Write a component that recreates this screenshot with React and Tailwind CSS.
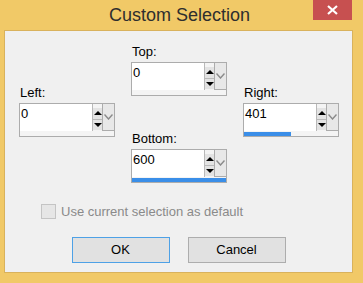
import React from "react"

const SpinBox = ({ value, fill }) => (
  <div className="w-[96px] h-[34px] border border-[#acacac] bg-[#f4f4f4] flex flex-col">
    <div className="flex h-[27px]">
      <div className="flex-1 bg-white pl-[1px] pt-[2px] text-[13px] leading-[16px] text-black">{value}</div>
      <div className="w-[10px] flex flex-col border-l border-[#b9b9b9]">
        <div className="flex-1 mt-[4px] bg-[#e3e3e3] border-b border-[#b9b9b9] flex items-center justify-center">
          <div className="w-0 h-0 border-l-[4px] border-r-[4px] border-b-[4px] border-l-transparent border-r-transparent border-b-black" />
        </div>
        <div className="flex-1 mb-[1px] bg-[#e3e3e3] flex items-center justify-center">
          <div className="w-0 h-0 border-l-[4px] border-r-[4px] border-t-[4px] border-l-transparent border-r-transparent border-t-black" />
        </div>
      </div>
      <div className="w-[13px] -mt-[1px] -mr-[1px] h-[28px] bg-[#e8e8e8] border border-[#acacac] flex items-center justify-center">
        <svg width="9" height="6" viewBox="0 0 9 6">
          <path d="M0.5 0.5 L4.5 5 L8.5 0.5" fill="none" stroke="#8a8a8a" strokeWidth="1.4" />
        </svg>
      </div>
    </div>
    <div className="h-[5px] mt-[1px]">
      {fill > 0 && <div className="h-[4px] bg-[#3a8ee8]" style={{ width: `${fill}%` }} />}
    </div>
  </div>
)

const Field = ({ label, value, fill }) => (
  <div className="flex flex-col">
    <div className="h-[15px] leading-[15px] text-[13px] text-black mb-[3px] pl-[1px]">{label}</div>
    <SpinBox value={value} fill={fill} />
  </div>
)

export default function App() {
  return (
    <div className="w-[363px] h-[283px] bg-[#f1c967] flex flex-col font-['Liberation_Sans',Arial,sans-serif] overflow-hidden">
      <div className="relative h-[30px] flex items-center justify-center">
        <span className="text-[18px] text-[#2e2e2e] pt-[1px] pr-[4px]">Custom Selection</span>
        <div className="absolute top-0 right-[11px] w-[39px] h-[20px] bg-[#c75050] flex items-center justify-center">
          <svg width="11" height="10" viewBox="0 0 11 10">
            <path d="M1 1 L10 9 M10 1 L1 9" stroke="white" strokeWidth="2.2" />
          </svg>
        </div>
      </div>
      <div className="ml-[4px] mr-[10px] h-[243px] bg-[#f0f0f0] border border-[#d9b25c] flex flex-col">
        <div className="flex gap-[16px] pl-[14px]">
          <div className="pt-[54px]">
            <Field label="Left:" value="0" fill={0} />
          </div>
          <div className="pt-[13px] flex flex-col gap-[35px]">
            <Field label="Top:" value="0" fill={0} />
            <Field label="Bottom:" value="600" fill={100} />
          </div>
          <div className="pt-[54px]">
            <Field label="Right:" value="401" fill={50} />
          </div>
        </div>
        <div className="flex items-center mt-[19px] pl-[36px]">
          <div className="w-[15px] h-[15px] border border-[#c4c4c4] bg-[#e6e6e6]" />
          <span className="ml-[5px] text-[13px] text-[#8a8a8a]">Use current selection as default</span>
        </div>
        <div className="flex justify-center gap-[18px] mt-[15px]">
          <button className="w-[98px] h-[26px] bg-[#e1e1e1] border border-[#4ea1e6] text-[13px] text-black">OK</button>
          <button className="w-[98px] h-[26px] bg-[#e1e1e1] border border-[#adadad] text-[13px] text-black">Cancel</button>
        </div>
      </div>
    </div>
  )
}
